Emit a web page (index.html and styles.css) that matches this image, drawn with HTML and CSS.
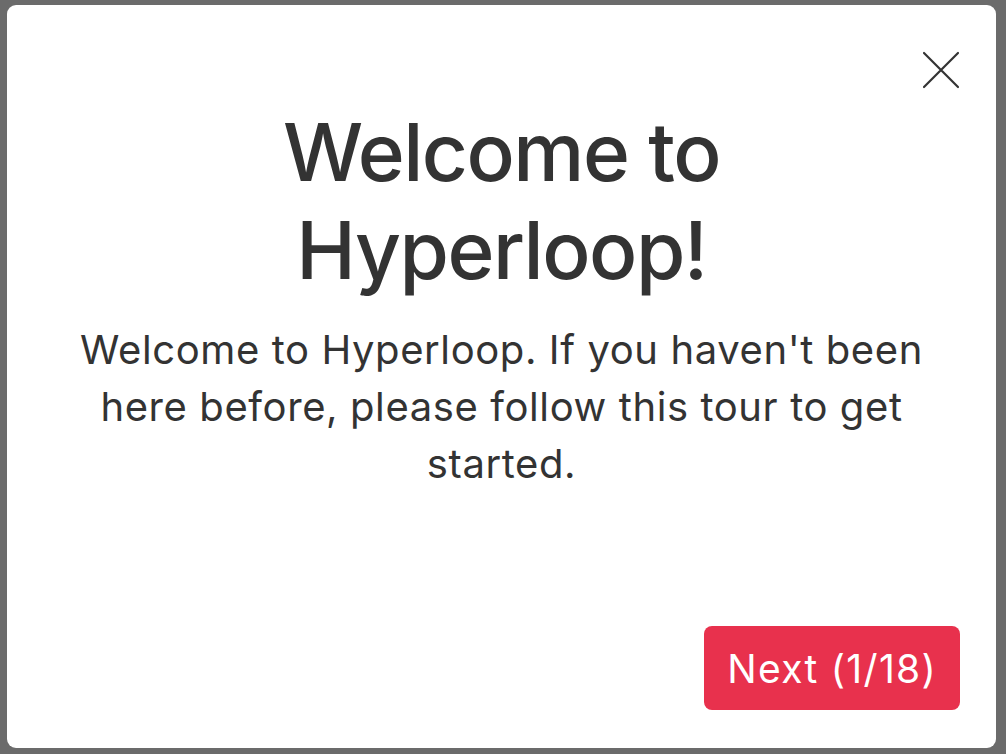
FILE: index.html
```html
<!DOCTYPE html>
<html lang="en">
<head>
<meta charset="utf-8">
<title>Welcome to Hyperloop</title>
<link rel="stylesheet" href="styles.css">
</head>
<body>
<div class="backdrop">
  <div class="modal" role="dialog" aria-labelledby="tour-title">
    <button class="close" aria-label="Close">
      <svg width="38" height="38" viewBox="0 0 38 38" aria-hidden="true">
        <path d="M2 2 L36 36 M36 2 L2 36" stroke="#333" stroke-width="2.2" stroke-linecap="round" fill="none"/>
      </svg>
    </button>
    <div class="content">
      <h1 id="tour-title" class="title">Welcome to<br>Hyperloop!</h1>
      <p class="text">Welcome to Hyperloop. If you haven't been here before, please follow this tour to get started.</p>
    </div>
    <div class="footer">
      <button class="next">Next (1/18)</button>
    </div>
  </div>
</div>
</body>
</html>
```

FILE: styles.css
```css
html, body {
  margin: 0;
  padding: 0;
  height: 100%;
}

body {
  background: #6b6b6b;
  font-family: Inter, "Noto Sans", sans-serif;
  color: #333;
}

.backdrop {
  box-sizing: border-box;
  height: 754px;
  padding: 5px 10px 6px 7px;
  display: flex;
}

.modal {
  position: relative;
  flex: 1;
  background: #fff;
  border-radius: 9px;
  display: flex;
  flex-direction: column;
  padding: 0 36px 38px 36px;
}

.close {
  position: absolute;
  top: 46px;
  right: 36px;
  width: 38px;
  height: 38px;
  padding: 0;
  border: 0;
  background: none;
  cursor: pointer;
}

.close svg {
  display: block;
}

.content {
  flex: 1;
  text-align: center;
  padding-top: 98px;
}

.title {
  margin: 0;
  font-family: Inter, "Liberation Sans", sans-serif;
  font-weight: 500;
  font-size: 80px;
  letter-spacing: -1.5px;
  line-height: 98px;
  color: #333;
}

.text {
  margin: 22px 0 0;
  font-size: 40px;
  letter-spacing: 0.6px;
  line-height: 57px;
  color: #333;
}

.footer {
  display: flex;
  justify-content: flex-end;
}

.next {
  height: 84px;
  padding: 0 23px;
  border: 0;
  border-radius: 8px;
  background: #e8314d;
  color: #fff;
  font-family: Inter, "Noto Sans", sans-serif;
  font-size: 39px;
  letter-spacing: 1.3px;
  cursor: pointer;
}
```
